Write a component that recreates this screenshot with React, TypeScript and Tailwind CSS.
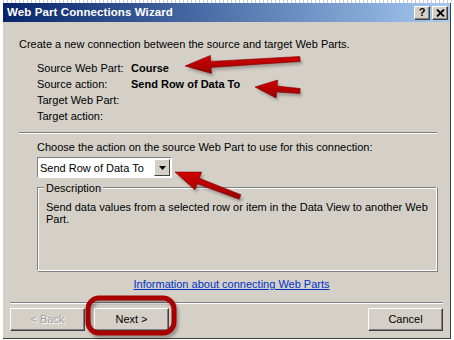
import React from "react";

const font = { fontFamily: '"Liberation Sans", Arial, sans-serif' };

type Pt = [number, number];

// builds a tapered arrow polygon from tail to tip
function arrowPoints(tail: Pt, tip: Pt, head: number, headW: number, tailW: number, neckW: number) {
  const dx = tip[0] - tail[0];
  const dy = tip[1] - tail[1];
  const len = Math.hypot(dx, dy);
  const ux = dx / len;
  const uy = dy / len;
  const nx = -uy;
  const ny = ux;
  const bx = tip[0] - ux * head;
  const by = tip[1] - uy * head;
  const p: Pt[] = [
    [tail[0] + nx * tailW / 2, tail[1] + ny * tailW / 2],
    [bx + nx * neckW / 2, by + ny * neckW / 2],
    [bx + nx * headW / 2, by + ny * headW / 2],
    tip,
    [bx - nx * headW / 2, by - ny * headW / 2],
    [bx - nx * neckW / 2, by - ny * neckW / 2],
    [tail[0] - nx * tailW / 2, tail[1] - ny * tailW / 2],
  ];
  return p.map((q) => `${q[0].toFixed(1)},${q[1].toFixed(1)}`).join(" ");
}

function Arrow({ tail, tip, head, headW }: { tail: Pt; tip: Pt; head: number; headW: number }) {
  const pts = arrowPoints(tail, tip, head, headW, 5, 6);
  return (
    <g>
      <polygon points={pts} fill="#000" opacity="0.25" transform="translate(2,3)" filter="url(#blur)" />
      <polygon points={pts} fill="url(#red)" stroke="#7a0000" strokeWidth="0.6" strokeLinejoin="round" />
    </g>
  );
}

function TitleButton({ children }: { children: React.ReactNode }) {
  return (
    <div className="w-[16px] h-[14px] bg-[#d4d0c8] border border-t-white border-l-white border-r-[#404040] border-b-[#404040] flex items-center justify-center shadow-[inset_-1px_-1px_0_#808080]">
      {children}
    </div>
  );
}

function Button({ label, disabled }: { label: string; disabled?: boolean }) {
  return (
    <div className="w-[75px] h-[23px] bg-[#d4d0c8] border border-t-white border-l-white border-r-[#404040] border-b-[#404040] shadow-[inset_-1px_-1px_0_#808080] flex items-center justify-center text-[11px]">
      <span className={disabled ? "text-[#a0a0a0] [text-shadow:1px_1px_0_#fff]" : "text-black"}>{label}</span>
    </div>
  );
}

export default function App() {
  return (
    <div className="relative w-[454px] h-[340px] overflow-hidden bg-white" style={font}>
      <div className="absolute inset-x-0 top-0 h-[3px] bg-[repeating-linear-gradient(90deg,#ffffff_0,#ffffff_3px,#c8cbe0_3px,#c8cbe0_4px)]" />
      <div className="pt-[3px] pl-[3px]">
        <div className="w-[448px] h-[336px] bg-[#d4d0c8] border-r border-b border-r-[#404040] border-b-[#404040] flex flex-col">
          {/* title bar */}
          <div className="h-[19px] bg-gradient-to-r from-[#0a246a] to-[#a6caf0] flex items-center justify-between pl-[4px] pr-[2px]">
            <span className="text-white font-bold text-[11.5px] tracking-[0.1px]">Web Part Connections Wizard</span>
            <div className="flex gap-[2px]">
              <TitleButton>
                <span className="text-[11px] font-bold leading-none text-black">?</span>
              </TitleButton>
              <TitleButton>
                <svg width="9" height="8" viewBox="0 0 9 8">
                  <path d="M1 0.5 L8 7.5 M8 0.5 L1 7.5" stroke="#000" strokeWidth="1.8" />
                </svg>
              </TitleButton>
            </div>
          </div>

          {/* body */}
          <div className="flex flex-col text-[11px] text-black leading-[16px]">
            <p className="mt-[14px] ml-[16px]">Create a new connection between the source and target Web Parts.</p>

            <div className="mt-[8px] ml-[34px] grid grid-cols-[94px_1fr]">
              <span>Source Web Part:</span>
              <span className="font-bold">Course</span>
              <span>Source action:</span>
              <span className="font-bold">Send Row of Data To</span>
              <span>Target Web Part:</span>
              <span></span>
              <span>Target action:</span>
              <span></span>
            </div>

            <div className="mt-[8px] ml-[16px] mr-[13px] h-[2px] border-t border-t-[#808080] border-b border-b-white" />

            <p className="mt-[5px] ml-[34px]">Choose the action on the source Web Part to use for this connection:</p>

            <div className="mt-[2px] ml-[34px] w-[135px] h-[21px] bg-white border border-t-[#808080] border-l-[#808080] border-r-white border-b-white flex items-center">
              <span className="flex-1 pl-[2px]">Send Row of Data To</span>
              <div className="w-[16px] h-[17px] mr-[1px] bg-[#d4d0c8] border border-t-white border-l-white border-r-[#404040] border-b-[#404040] flex items-center justify-center">
                <svg width="7" height="4" viewBox="0 0 7 4">
                  <path d="M0 0 H7 L3.5 4 Z" fill="#000" />
                </svg>
              </div>
            </div>

            <div className="relative mt-[9px] ml-[34px] mr-[13px] h-[84px] border border-t-[#808080] border-l-[#808080] border-r-white border-b-white shadow-[inset_1px_1px_0_#fff,1px_1px_0_#808080]">
              <span className="absolute -top-[8px] left-[6px] px-[2px] bg-[#d4d0c8]">Description</span>
              <p className="mt-[13px] mx-[8px] leading-[12px]">
                Send data values from a selected row or item in the Data View to another Web Part.
              </p>
            </div>

            <div className="mt-[5px] flex justify-center pl-[10px]">
              <span className="text-[#0033cc] underline">Information about connecting Web Parts</span>
            </div>
          </div>

          <div className="mt-[10px] mx-[7px] h-[2px] border-t border-t-[#808080] border-b border-b-white" />

          <div className="mt-[4px] mx-[7px] flex items-center">
            <Button label="< Back" disabled />
            <div className="ml-[9px]">
              <Button label="Next >" />
            </div>
            <div className="ml-auto">
              <Button label="Cancel" />
            </div>
          </div>
        </div>
      </div>

      {/* annotations drawn over the screenshot */}
      <svg className="absolute inset-0 pointer-events-none" width="454" height="340" viewBox="0 0 454 340">
        <defs>
          <linearGradient id="red" x1="0" y1="0" x2="0" y2="1">
            <stop offset="0" stopColor="#d20000" />
            <stop offset="1" stopColor="#9a0000" />
          </linearGradient>
          <filter id="blur" x="-20%" y="-20%" width="140%" height="140%">
            <feGaussianBlur stdDeviation="1.5" />
          </filter>
        </defs>
        <Arrow tail={[300, 59]} tip={[185, 66]} head={26} headW={18} />
        <Arrow tail={[300, 91]} tip={[255, 87]} head={22} headW={18} />
        <Arrow tail={[240, 197]} tip={[175, 172]} head={25} headW={19} />
        <rect x="89" y="299" width="86" height="35" rx="11" fill="none" stroke="#000" strokeOpacity="0.3" strokeWidth="5" transform="translate(1,2)" filter="url(#blur)" />
        <rect x="88" y="298" width="86" height="35" rx="11" fill="none" stroke="#a80000" strokeWidth="5" />
      </svg>
    </div>
  );
}
